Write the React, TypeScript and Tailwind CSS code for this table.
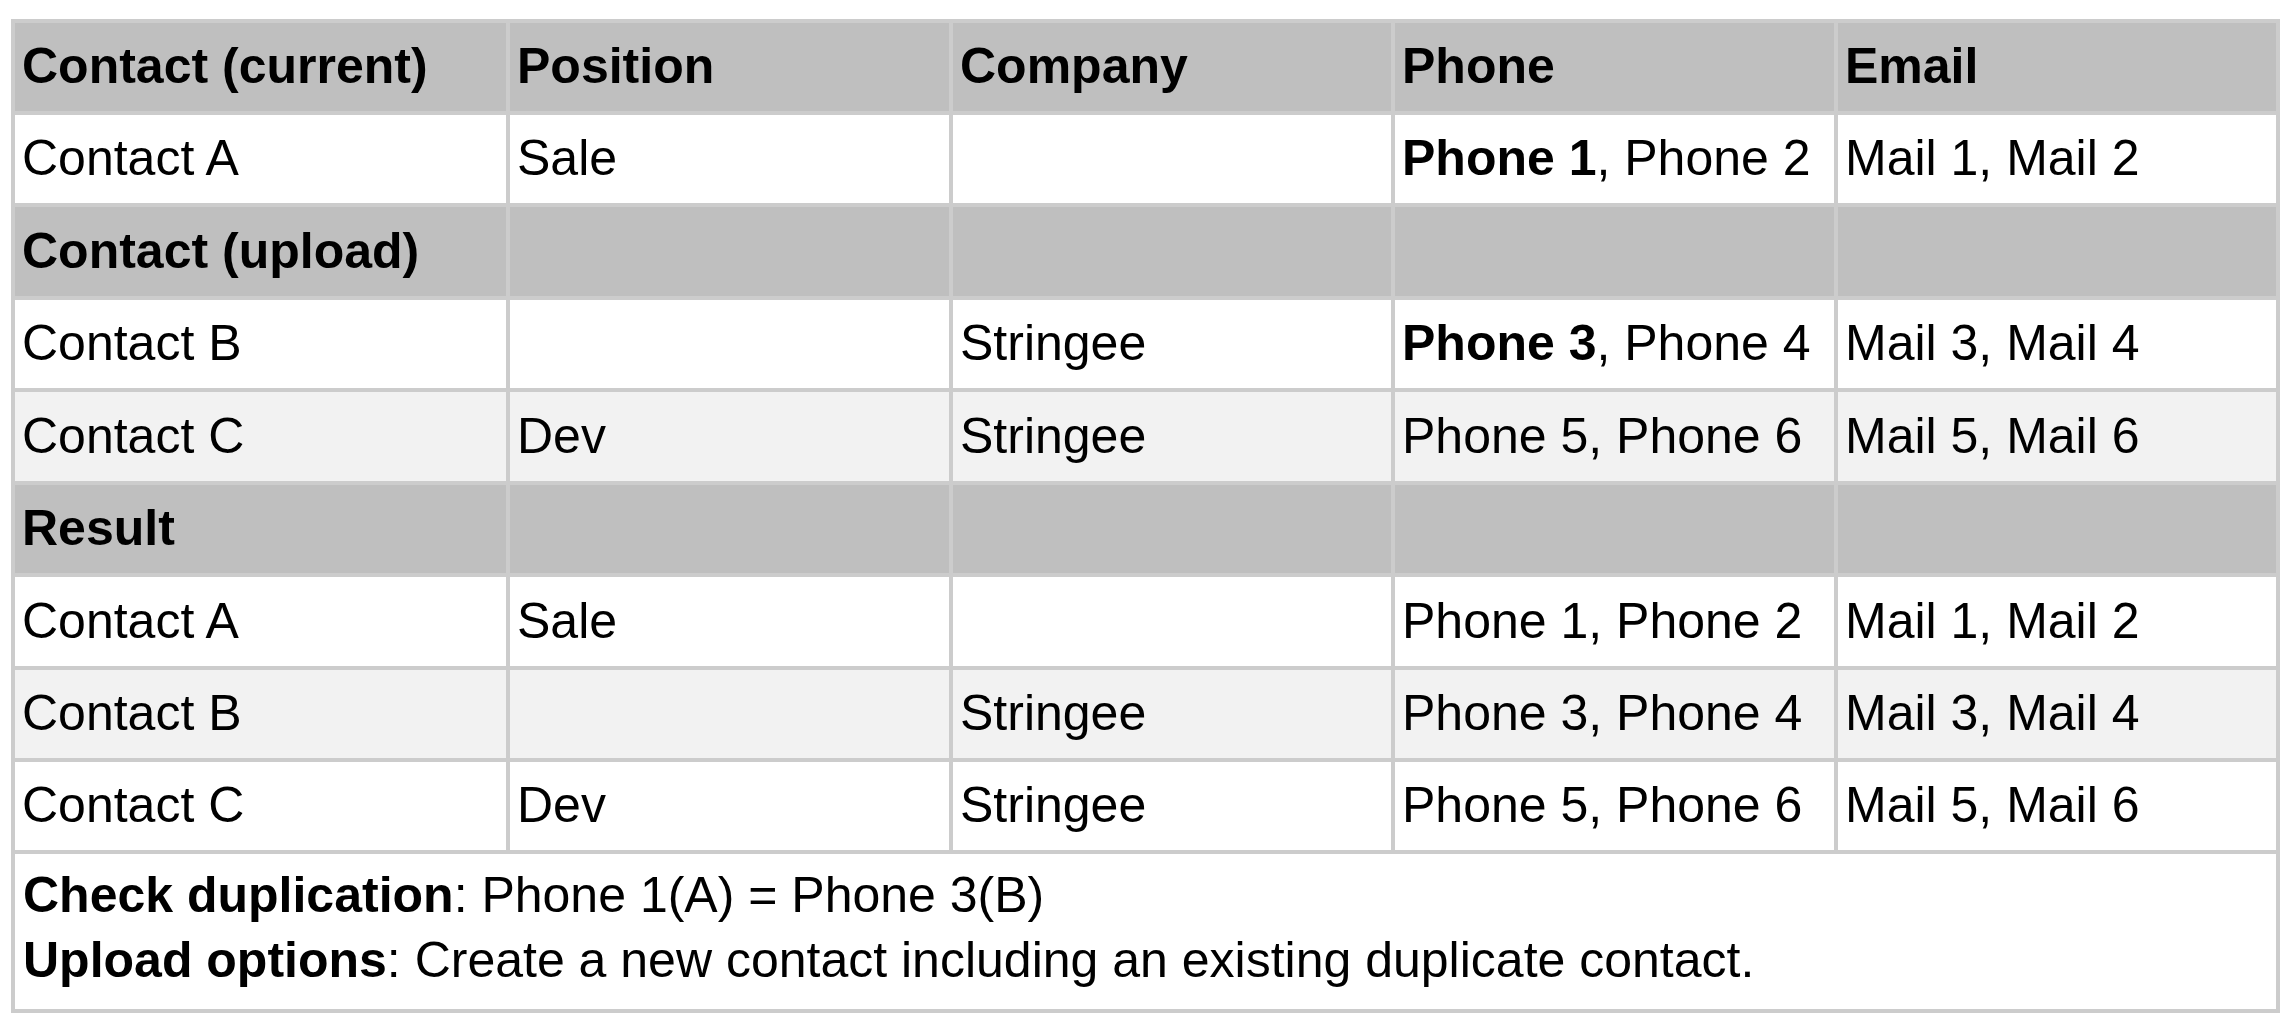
import type { ReactNode } from "react";

type Row = {
  cells: ReactNode[];
  bg: string;
  h: string;
  bold?: boolean;
};

const GRAY = "bg-[#bfbfbf]";
const WHITE = "bg-white";
const STRIPE = "bg-[#f2f2f2]";

const rows: Row[] = [
  { cells: ["Contact (current)", "Position", "Company", "Phone", "Email"], bg: GRAY, h: "h-[88px]", bold: true },
  {
    cells: ["Contact A", "Sale", "", <><b>Phone 1</b>, Phone 2</>, "Mail 1, Mail 2"],
    bg: WHITE,
    h: "h-[88px]",
  },
  { cells: ["Contact (upload)", "", "", "", ""], bg: GRAY, h: "h-[89px]", bold: true },
  {
    cells: ["Contact B", "", "Stringee", <><b>Phone 3</b>, Phone 4</>, "Mail 3, Mail 4"],
    bg: WHITE,
    h: "h-[88px]",
  },
  { cells: ["Contact C", "Dev", "Stringee", "Phone 5, Phone 6", "Mail 5, Mail 6"], bg: STRIPE, h: "h-[89px]" },
  { cells: ["Result", "", "", "", ""], bg: GRAY, h: "h-[88px]", bold: true },
  { cells: ["Contact A", "Sale", "", "Phone 1, Phone 2", "Mail 1, Mail 2"], bg: WHITE, h: "h-[89px]" },
  { cells: ["Contact B", "", "Stringee", "Phone 3, Phone 4", "Mail 3, Mail 4"], bg: STRIPE, h: "h-[88px]" },
  { cells: ["Contact C", "Dev", "Stringee", "Phone 5, Phone 6", "Mail 5, Mail 6"], bg: WHITE, h: "h-[88px]" },
];

export default function App() {
  return (
    <div className="min-h-screen bg-white pt-[19px] pl-[11px] font-['Liberation_Sans',Arial,sans-serif] text-[50px] leading-[1.15] text-black">
      {/* table: grey background shows through the gaps as cell borders */}
      <div className="grid w-[2269px] grid-cols-[491px_439px_438px_439px_438px] gap-[4px] bg-[#cccccc] p-[4px]">
        {rows.map((row, i) =>
          row.cells.map((cell, j) => (
            <div
              key={`${i}-${j}`}
              className={`flex items-center whitespace-nowrap px-[7px] ${row.h} ${row.bg} ${row.bold ? "font-bold" : ""}`}
            >
              {cell}
            </div>
          ))
        )}

        {/* notes */}
        <div className="col-span-5 h-[155px] bg-white px-[8px] pt-[9px] leading-[65px]">
          <p>
            <b>Check duplication</b>: Phone 1(A) = Phone 3(B)
          </p>
          <p>
            <b>Upload options</b>: Create a new contact including an existing duplicate contact.
          </p>
        </div>
      </div>
    </div>
  );
}
